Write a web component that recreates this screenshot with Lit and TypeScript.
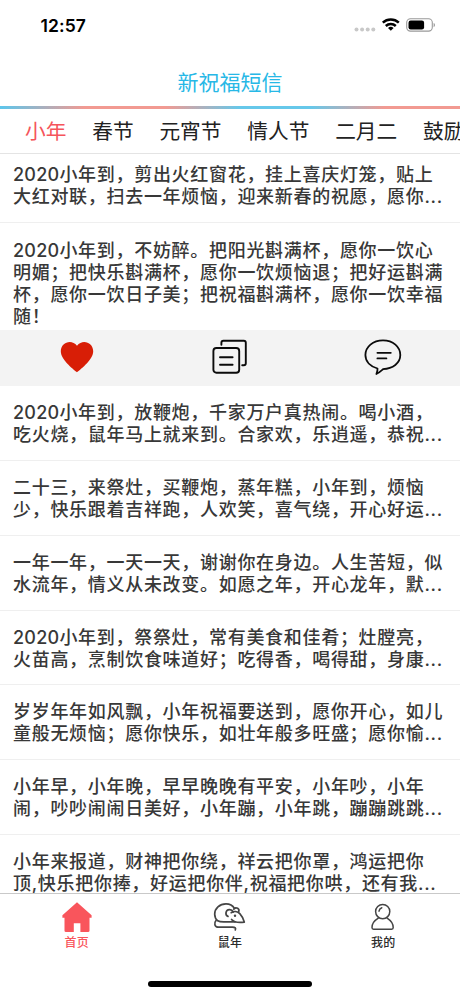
import { LitElement, html, css, svg } from "lit";
import { customElement, property, state } from "lit/decorators.js";
import { classMap } from "lit/directives/class-map.js";

interface Message {
  lines: string[];
  open?: boolean;
}

const MESSAGES: Message[] = [
  { lines: ["2020小年到，剪出火红窗花，挂上喜庆灯笼，贴上", "大红对联，扫去一年烦恼，迎来新春的祝愿，愿你..."] },
  {
    open: true,
    lines: [
      "2020小年到，不妨醉。把阳光斟满杯，愿你一饮心",
      "明媚；把快乐斟满杯，愿你一饮烦恼退；把好运斟满",
      "杯，愿你一饮日子美；把祝福斟满杯，愿你一饮幸福",
      "随！",
    ],
  },
  { lines: ["2020小年到，放鞭炮，千家万户真热闹。喝小酒，", "吃火烧，鼠年马上就来到。合家欢，乐逍遥，恭祝..."] },
  { lines: ["二十三，来祭灶，买鞭炮，蒸年糕，小年到，烦恼", "少，快乐跟着吉祥跑，人欢笑，喜气绕，开心好运..."] },
  { lines: ["一年一年，一天一天，谢谢你在身边。人生苦短，似", "水流年，情义从未改变。如愿之年，开心龙年，默..."] },
  { lines: ["2020小年到，祭祭灶，常有美食和佳肴；灶膛亮，", "火苗高，烹制饮食味道好；吃得香，喝得甜，身康..."] },
  { lines: ["岁岁年年如风飘，小年祝福要送到，愿你开心，如儿", "童般无烦恼；愿你快乐，如壮年般多旺盛；愿你愉..."] },
  { lines: ["小年早，小年晚，早早晚晚有平安，小年吵，小年", "闹，吵吵闹闹日美好，小年蹦，小年跳，蹦蹦跳跳..."] },
  { lines: ["小年来报道，财神把你绕，祥云把你罩，鸿运把你", "顶,快乐把你捧，好运把你伴,祝福把你哄，还有我..."] },
];

@customElement("status-bar")
class StatusBar extends LitElement {
  static styles = css`
    :host { display: flex; height: 51px; flex: none; align-items: center; justify-content: space-between; padding: 0 25px 0 40.5px; box-sizing: border-box; }
    .time { font: 600 17.5px/20px Inter, sans-serif; color: #000; letter-spacing: 0.1px; }
    .icons { display: block; margin-top: -1px; }
  `;
  render() {
    return html`
      <span class="time">12:57</span>
      <svg class="icons" width="82" height="20" viewBox="0 0 82 20">
        <g fill="#c8c8c8">
          <circle cx="3.5" cy="14.5" r="2" /><circle cx="9.1" cy="14.5" r="2" />
          <circle cx="14.7" cy="14.5" r="2" /><circle cx="20.3" cy="14.5" r="2" />
        </g>
        <g fill="none" stroke="#000" stroke-width="2.5">
          <path d="M29.8 7.6a12 12 0 0 1 16 0" />
          <path d="M32.8 11a7.4 7.4 0 0 1 10 0" />
        </g>
        <path d="M37.8 15.8l-2.8-2.8a4.2 4.2 0 0 1 5.6 0z" fill="#000" />
        <rect x="53.7" y="3.7" width="25.6" height="12.4" rx="3.8" fill="none" stroke="#999" stroke-width="1.1" />
        <rect x="55.5" y="5.5" width="15.6" height="8.9" rx="2.2" />
        <path d="M80.6 8v4.2c1.8-.7 1.8-3.5 0-4.2z" fill="#999" />
      </svg>
    `;
  }
}

@customElement("tab-strip")
class TabStrip extends LitElement {
  static styles = css`
    :host { display: block; flex: none; overflow: hidden; border-bottom: 1.5px solid #e4e4e4; }
    .tabs { display: flex; gap: 25.8px; padding: 2px 0 0 25px; height: 44px; box-sizing: border-box; align-items: center; }
    .tab { flex: none; white-space: nowrap; font-size: 20.7px; line-height: 30px; color: #222; }
    .active { color: #f5545b; }
  `;
  @state() private current = 0;
  private tabs = ["小年", "春节", "元宵节", "情人节", "二月二", "鼓励"];
  render() {
    return html`<div class="tabs">
      ${this.tabs.map(
        (t, i) => html`<span class=${classMap({ tab: true, active: i === this.current })} @click=${() => (this.current = i)}>${t}</span>`
      )}
    </div>`;
  }
}

@customElement("message-row")
class MessageRow extends LitElement {
  static styles = css`
    :host { display: block; }
    .text { padding: 16px 0 0 13px; border-bottom: 1px solid #efefef; height: 74.8px; box-sizing: border-box; }
    .text.open { height: 107.4px; padding-top: 17px; border: 0; }
    .line { height: 22px; line-height: 22px; font-size: 18px; font-weight: 500; letter-spacing: 0.7px; white-space: nowrap; color: #383838; }
    .year { letter-spacing: 0.25px; }
    .actions { display: grid; grid-template-columns: repeat(3, 1fr); height: 56px; align-items: center; justify-items: center; background: #f3f3f3; }
    svg { display: block; margin-top: -3px; }
  `;
  @property({ attribute: false }) message!: Message;

  private line(text: string) {
    const year = text.match(/^\d+/)?.[0] ?? "";
    return html`<div class="line">${year ? html`<span class="year">${year}</span>` : ""}${text.slice(year.length)}</div>`;
  }

  render() {
    const open = !!this.message.open;
    return html`
      <div class=${classMap({ text: true, open })}>${this.message.lines.map((l) => this.line(l))}</div>
      ${open
        ? html`<div class="actions">
            <svg width="40" height="40" viewBox="0 0 40 40">
              <path d="M20 35.2C15.5 31.5 3.8 22.5 3.8 14.2 3.8 5.5 14.5 1.5 20 8.8 25.5 1.5 36.2 5.5 36.2 14.2 36.2 22.5 24.5 31.5 20 35.2z" fill="#d81e06" />
            </svg>
            <svg width="40" height="40" viewBox="0 0 40 40" fill="none" stroke="#0b0b0b" stroke-width="1.9" stroke-linecap="round">
              <rect x="3.4" y="11" width="25.8" height="24.8" rx="3" />
              <path d="M11.4 7.8V5.8q0-2 2-2H33.8q2 0 2 2V26.3q0 2-2 2h-1.6M10 20.3h12.6M10 27.7h12.6" />
            </svg>
            <svg width="40" height="40" viewBox="0 0 40 40" fill="none" stroke="#0b0b0b" stroke-width="1.8" stroke-linecap="round" stroke-linejoin="round">
              <path d="M14.5 31.5C7.2 29.5 2.4 24.4 2.4 18.1 2.4 9.9 10 3.4 20 3.4S37.3 9.9 37.3 18.1C37.3 26.2 29.8 31.8 20 32.2c-2.4 2-3.8 3.8-6.6 4.8.6-1.8 1.3-3.4 1.1-5.5z" />
              <path d="M14.4 15.8h13.4M14.4 21.4h9" />
            </svg>
          </div>`
        : ""}
    `;
  }
}

@customElement("bottom-bar")
class BottomBar extends LitElement {
  static styles = css`
    :host { display: flex; flex-direction: column; flex: none; height: 103px; box-sizing: border-box; border-top: 1px solid #c9c9c9; background: #fff; align-items: center; justify-content: space-between; padding-bottom: 9.5px; }
    .items { display: grid; grid-template-columns: repeat(3, 1fr); width: 100%; }
    .item { display: flex; flex-direction: column; align-items: center; padding-top: 6px; color: #2b2b2b; }
    .label { font-size: 12px; line-height: 16px; font-weight: 500; margin-top: 1px; letter-spacing: 0.2px; }
    .active { color: #f9555c; }
    .home { width: 164px; height: 5.5px; border-radius: 3px; background: #000; }
    svg { display: block; }
  `;
  private icons = [
    svg`<path fill="currentColor" d="M18 2.2L32.6 15.3V17.7H30.5V30.7Q30.5 32.1 29 32.1H21.4V23.3H14.8V32.1H7Q5.5 32.1 5.5 30.7V17.7H3.4V15.3z"/>`,
    svg`<g fill="none" stroke="#454545" stroke-width="1.7" stroke-linecap="round" stroke-linejoin="round">
      <path d="M22.6 8.6C20.7 5.5 17.6 3.9 14 3.9 7.6 3.9 2.7 8.5 2.7 14.2c0 2.8 1.2 5 3 6.6 2.2 1.3 4.600 1.100 7.300 1.100H23"/>
      <path d="M16 16.400c-3.200-1.200-2.600-6.500 1.400-6.700 2-.1 3.200.9 3.900 2.300M21.800 9c2.200-2.400 6.400-.4 4.700 3.200"/>
      <path d="M19.200 12.700c2.600-1.600 6.300-1.400 8.600 1 2.200 2.300 3.600 5.600 4.500 8.400-5 .6-10.200.4-12.700-2.600"/>
      <path d="M4 20.500C1.900 22.800 2.300 27.200 6.500 27.200H20.500c2.800 0 3.600.9 2.800 2.700"/>
    </g><circle cx="23" cy="15.700" r="1.200" fill="#454545"/>`,
    svg`<g fill="none" stroke="#454545" stroke-width="1.5" stroke-linecap="round" stroke-linejoin="round">
      <circle cx="17.700" cy="11.600" r="7.100"/>
      <path d="M13.300 18.200C9.300 20.600 7 24.200 7 27.600q0 1.600 1.500 1.600H26.700q1.500 0 1.500-1.600c0-3.400-2.300-7-6.100-9.400M14 11.200q.4-2.600 2.800-3.400"/>
    </g>`,
  ];
  render() {
    return html`
      <div class="items">
        ${["首页", "鼠年", "我的"].map(
          (label, i) => html`<div class=${classMap({ item: true, active: i === 0 })}>
            <svg width="36" height="34" viewBox="0 0 36 34">${this.icons[i]}</svg>
            <span class="label">${label}</span>
          </div>`
        )}
      </div>
      <div class="home"></div>
    `;
  }
}

@customElement("app-root")
class AppRoot extends LitElement {
  static styles = css`
    :host { display: flex; flex-direction: column; width: 460px; height: 996px; overflow: hidden; background: #fff; font-family: Inter, "Noto Sans CJK SC", sans-serif; }
    .title { flex: none; height: 54.5px; display: flex; align-items: center; justify-content: center; padding-top: 9px; box-sizing: border-box; font-size: 21px; line-height: 30px; color: #27b8e6; }
    .stripe { flex: none; height: 3px; background: linear-gradient(90deg, #5cc6ec 0, #f29a92 85px, #f29a92 165px, #66c8ea 240px, #66c8ea 310px, #f29a92 385px); }
    .list { flex: 1; min-height: 0; overflow: hidden; }
    .rows { margin-top: -5.4px; }
  `;
  render() {
    return html`
      <status-bar></status-bar>
      <div class="title">新祝福短信</div>
      <div class="stripe"></div>
      <tab-strip></tab-strip>
      <div class="list"><div class="rows">${MESSAGES.map((m) => html`<message-row .message=${m}></message-row>`)}</div></div>
      <bottom-bar></bottom-bar>
    `;
  }
}
